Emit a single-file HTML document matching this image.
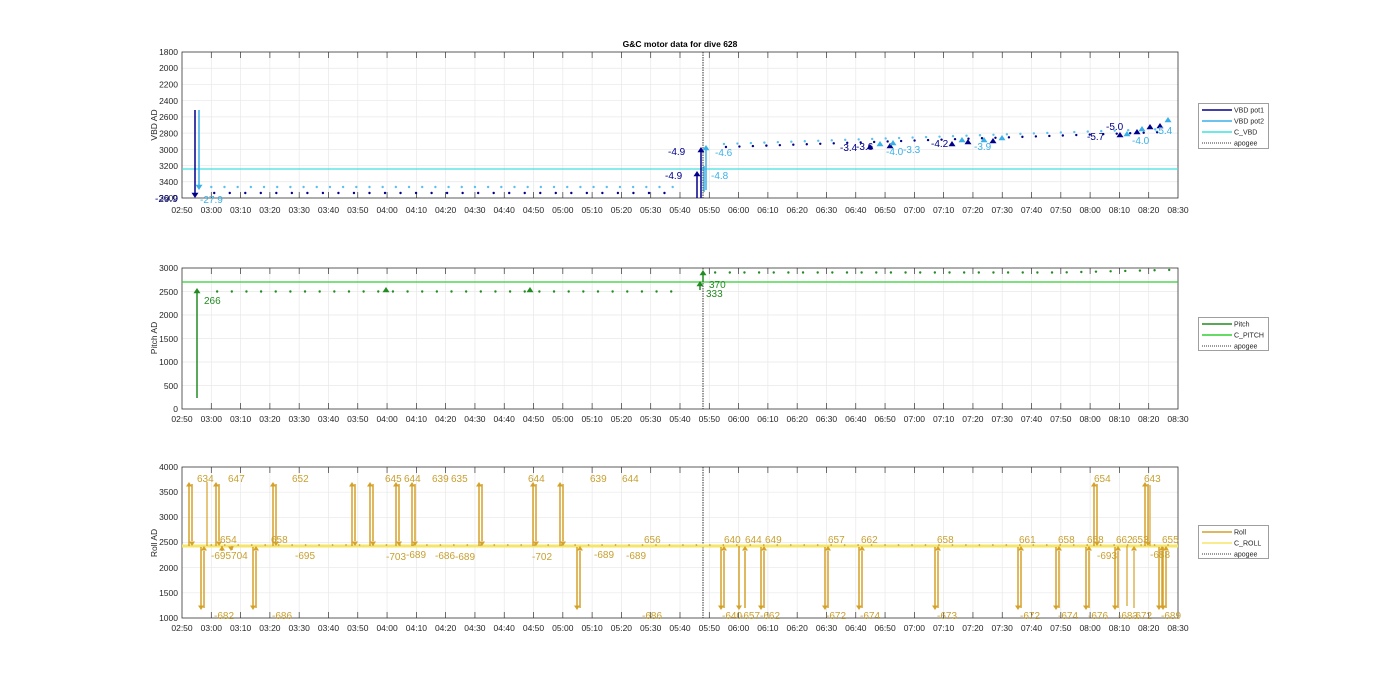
<!DOCTYPE html>
<html><head><meta charset="utf-8"><style>
body{margin:0;background:#fff;width:1400px;height:693px;overflow:hidden}
svg{display:block;font-family:"Liberation Sans",sans-serif}
.t{font-size:8.5px;fill:#262626}
</style></head><body>
<svg id="s" width="1400" height="693" xmlns="http://www.w3.org/2000/svg">
<g id="grid"></g>
<g id="data"></g>
<text x="680" y="47" text-anchor="middle" font-size="8.5" font-weight="bold" fill="#000">G&amp;C motor data for dive 628</text>
<g class="t" text-anchor="end">
<text x="178" y="55">1800</text><text x="178" y="71">2000</text><text x="178" y="87.5">2200</text><text x="178" y="104">2400</text><text x="178" y="120">2600</text><text x="178" y="136.5">2800</text><text x="178" y="153">3000</text><text x="178" y="169">3200</text><text x="178" y="185">3400</text><text x="178" y="201">3600</text>
<text x="178" y="271">3000</text><text x="178" y="295">2500</text><text x="178" y="318">2000</text><text x="178" y="342">1500</text><text x="178" y="365">1000</text><text x="178" y="389">500</text><text x="178" y="412">0</text>
<text x="178" y="470">4000</text><text x="178" y="495">3500</text><text x="178" y="520">3000</text><text x="178" y="545">2500</text><text x="178" y="571">2000</text><text x="178" y="596">1500</text><text x="178" y="621">1000</text>
</g>
<g class="t" font-size="9"><text transform="translate(157,125) rotate(-90)" text-anchor="middle">VBD AD</text>
<text transform="translate(157,338) rotate(-90)" text-anchor="middle">Pitch AD</text>
<text transform="translate(157,543) rotate(-90)" text-anchor="middle">Roll AD</text></g>
<g class="t" text-anchor="middle" id="xl1"><text x="182" y="213">02:50</text><text x="211.3" y="213">03:00</text><text x="240.6" y="213">03:10</text><text x="269.9" y="213">03:20</text><text x="299.2" y="213">03:30</text><text x="328.5" y="213">03:40</text><text x="357.8" y="213">03:50</text><text x="387.1" y="213">04:00</text><text x="416.4" y="213">04:10</text><text x="445.6" y="213">04:20</text><text x="474.9" y="213">04:30</text><text x="504.2" y="213">04:40</text><text x="533.5" y="213">04:50</text><text x="562.8" y="213">05:00</text><text x="592.1" y="213">05:10</text><text x="621.4" y="213">05:20</text><text x="650.7" y="213">05:30</text><text x="680" y="213">05:40</text><text x="709.3" y="213">05:50</text><text x="738.6" y="213">06:00</text><text x="767.9" y="213">06:10</text><text x="797.2" y="213">06:20</text><text x="826.5" y="213">06:30</text><text x="855.8" y="213">06:40</text><text x="885.1" y="213">06:50</text><text x="914.4" y="213">07:00</text><text x="943.6" y="213">07:10</text><text x="972.9" y="213">07:20</text><text x="1002.2" y="213">07:30</text><text x="1031.5" y="213">07:40</text><text x="1060.8" y="213">07:50</text><text x="1090.1" y="213">08:00</text><text x="1119.4" y="213">08:10</text><text x="1148.7" y="213">08:20</text><text x="1178" y="213">08:30</text></g>
<g class="t" text-anchor="middle"><text x="182" y="422">02:50</text><text x="211.3" y="422">03:00</text><text x="240.6" y="422">03:10</text><text x="269.9" y="422">03:20</text><text x="299.2" y="422">03:30</text><text x="328.5" y="422">03:40</text><text x="357.8" y="422">03:50</text><text x="387.1" y="422">04:00</text><text x="416.4" y="422">04:10</text><text x="445.6" y="422">04:20</text><text x="474.9" y="422">04:30</text><text x="504.2" y="422">04:40</text><text x="533.5" y="422">04:50</text><text x="562.8" y="422">05:00</text><text x="592.1" y="422">05:10</text><text x="621.4" y="422">05:20</text><text x="650.7" y="422">05:30</text><text x="680" y="422">05:40</text><text x="709.3" y="422">05:50</text><text x="738.6" y="422">06:00</text><text x="767.9" y="422">06:10</text><text x="797.2" y="422">06:20</text><text x="826.5" y="422">06:30</text><text x="855.8" y="422">06:40</text><text x="885.1" y="422">06:50</text><text x="914.4" y="422">07:00</text><text x="943.6" y="422">07:10</text><text x="972.9" y="422">07:20</text><text x="1002.2" y="422">07:30</text><text x="1031.5" y="422">07:40</text><text x="1060.8" y="422">07:50</text><text x="1090.1" y="422">08:00</text><text x="1119.4" y="422">08:10</text><text x="1148.7" y="422">08:20</text><text x="1178" y="422">08:30</text></g>
<g class="t" text-anchor="middle"><text x="182" y="631">02:50</text><text x="211.3" y="631">03:00</text><text x="240.6" y="631">03:10</text><text x="269.9" y="631">03:20</text><text x="299.2" y="631">03:30</text><text x="328.5" y="631">03:40</text><text x="357.8" y="631">03:50</text><text x="387.1" y="631">04:00</text><text x="416.4" y="631">04:10</text><text x="445.6" y="631">04:20</text><text x="474.9" y="631">04:30</text><text x="504.2" y="631">04:40</text><text x="533.5" y="631">04:50</text><text x="562.8" y="631">05:00</text><text x="592.1" y="631">05:10</text><text x="621.4" y="631">05:20</text><text x="650.7" y="631">05:30</text><text x="680" y="631">05:40</text><text x="709.3" y="631">05:50</text><text x="738.6" y="631">06:00</text><text x="767.9" y="631">06:10</text><text x="797.2" y="631">06:20</text><text x="826.5" y="631">06:30</text><text x="855.8" y="631">06:40</text><text x="885.1" y="631">06:50</text><text x="914.4" y="631">07:00</text><text x="943.6" y="631">07:10</text><text x="972.9" y="631">07:20</text><text x="1002.2" y="631">07:30</text><text x="1031.5" y="631">07:40</text><text x="1060.8" y="631">07:50</text><text x="1090.1" y="631">08:00</text><text x="1119.4" y="631">08:10</text><text x="1148.7" y="631">08:20</text><text x="1178" y="631">08:30</text></g>
<!-- top labels -->
<g font-size="10">
<text x="155" y="202" fill="#00008b">-29.9</text><text x="200" y="203" fill="#3ab0e8">-27.9</text>
<text x="668" y="155" fill="#00008b">-4.9</text><text x="665" y="179" fill="#00008b">-4.9</text>
<text x="715" y="156" fill="#3ab0e8">-4.6</text><text x="711" y="179" fill="#3ab0e8">-4.8</text>
<text x="840" y="151" fill="#00008b">-3.4</text><text x="856" y="150" fill="#00008b">-3.6</text>
<text x="886" y="155" fill="#3ab0e8">-4.0</text><text x="903" y="153" fill="#3ab0e8">-3.3</text>
<text x="931" y="147" fill="#00008b">-4.2</text><text x="974" y="150" fill="#3ab0e8">-3.9</text>
<text x="1087" y="140" fill="#00008b">-5.7</text><text x="1106" y="130" fill="#00008b">-5.0</text>
<text x="1132" y="144" fill="#3ab0e8">-4.0</text><text x="1155" y="134" fill="#3ab0e8">-5.4</text>
<text x="204" y="304" fill="#228b22">266</text><text x="709" y="288" fill="#228b22">370</text><text x="706" y="297" fill="#228b22">333</text>
</g>
<g font-size="10" fill="#c8a030">
<text x="197" y="482">634</text><text x="228" y="482">647</text><text x="292" y="482">652</text><text x="271" y="543">658</text><text x="220" y="543">654</text>
<text x="211" y="559">-695704</text><text x="214" y="619">-682</text><text x="272" y="619">-686</text><text x="295" y="559">-695</text>
<text x="385" y="482">645</text><text x="404" y="482">644</text><text x="432" y="482">639</text><text x="451" y="482">635</text>
<text x="386" y="560">-703</text><text x="406" y="558">-689</text><text x="435" y="559">-686</text><text x="455" y="560">-689</text>
<text x="528" y="482">644</text><text x="532" y="560">-702</text><text x="590" y="482">639</text><text x="622" y="482">644</text>
<text x="594" y="558">-689</text><text x="626" y="559">-689</text><text x="644" y="543">656</text><text x="642" y="619">-686</text>
<text x="724" y="543">640</text><text x="745" y="543">644</text><text x="765" y="543">649</text><text x="828" y="543">657</text><text x="861" y="543">662</text><text x="937" y="543">658</text><text x="1019" y="543">661</text><text x="1058" y="543">658</text><text x="1087" y="543">658</text><text x="1094" y="482">654</text><text x="1116" y="543">662</text><text x="1132" y="543">653</text><text x="1144" y="482">643</text><text x="1162" y="543">655</text>
<text x="722" y="619">-640</text><text x="740" y="619">-657</text><text x="760" y="619">-662</text><text x="826" y="619">-672</text><text x="860" y="619">-674</text><text x="937" y="619">-673</text><text x="1020" y="619">-672</text><text x="1058" y="619">-674</text><text x="1088" y="619">-676</text><text x="1097" y="559">-693</text><text x="1118" y="619">-683</text><text x="1132" y="619">-672</text><text x="1150" y="558">-688</text><text x="1161" y="619">-689</text>
</g>
<!-- legends -->
<g font-size="7" fill="#262626">
<rect x="1198.5" y="103.5" width="70" height="45" fill="#fff" stroke="#888" stroke-width="0.8"/>
<line x1="1202" y1="110" x2="1232" y2="110" stroke="#00008b" stroke-width="1.5"/><text x="1234" y="112.5">VBD pot1</text>
<line x1="1202" y1="121" x2="1232" y2="121" stroke="#3ab0e8" stroke-width="1.5"/><text x="1234" y="123.5">VBD pot2</text>
<line x1="1202" y1="132" x2="1232" y2="132" stroke="#40e0e0" stroke-width="1.5"/><text x="1234" y="134.5">C_VBD</text>
<line x1="1202" y1="143" x2="1232" y2="143" stroke="#333" stroke-dasharray="1,1"/><text x="1234" y="145.5">apogee</text>
<rect x="1198.5" y="317.5" width="70" height="33" fill="#fff" stroke="#888" stroke-width="0.8"/>
<line x1="1202" y1="324" x2="1232" y2="324" stroke="#228b22" stroke-width="1.5"/><text x="1234" y="326.5">Pitch</text>
<line x1="1202" y1="335" x2="1232" y2="335" stroke="#32cd32" stroke-width="1.5"/><text x="1234" y="337.5">C_PITCH</text>
<line x1="1202" y1="346" x2="1232" y2="346" stroke="#333" stroke-dasharray="1,1"/><text x="1234" y="348.5">apogee</text>
<rect x="1198.5" y="525.5" width="70" height="33" fill="#fff" stroke="#888" stroke-width="0.8"/>
<line x1="1202" y1="532" x2="1232" y2="532" stroke="#d4a12a" stroke-width="1.5"/><text x="1234" y="534.5">Roll</text>
<line x1="1202" y1="543" x2="1232" y2="543" stroke="#f5e66a" stroke-width="1.5"/><text x="1234" y="545.5">C_ROLL</text>
<line x1="1202" y1="554" x2="1232" y2="554" stroke="#333" stroke-dasharray="1,1"/><text x="1234" y="556.5">apogee</text>
</g>
</svg>
<script>
var NS="http://www.w3.org/2000/svg",G=document.getElementById('grid'),D=document.getElementById('data');
function el(p,t,a){var e=document.createElementNS(NS,t);for(var k in a)e.setAttribute(k,a[k]);p.appendChild(e);return e}
function X(m){return 182+m*996/340}
var axes=[[52,198,9],[268,409,6],[467,618,6]];
axes.forEach(function(a){
 for(var i=1;i<34;i++){var x=X(i*10);el(G,'line',{x1:x,x2:x,y1:a[0],y2:a[1],stroke:'#e8e8e8','stroke-width':0.7});
  el(G,'line',{x1:x,x2:x,y1:a[1],y2:a[1]-6,stroke:'#333','stroke-width':0.7});el(G,'line',{x1:x,x2:x,y1:a[0],y2:a[0]+6,stroke:'#333','stroke-width':0.7});}
 for(var j=1;j<a[2];j++){var y=a[0]+(a[1]-a[0])*j/a[2];el(G,'line',{x1:182,x2:1178,y1:y,y2:y,stroke:'#e8e8e8','stroke-width':0.7});}
 el(G,'rect',{x:182,y:a[0],width:996,height:a[1]-a[0],fill:'none',stroke:'#333','stroke-width':0.8});
 el(D,'line',{x1:703,x2:703,y1:a[0],y2:a[1],stroke:'#333','stroke-width':1,'stroke-dasharray':'1.5,1'});
});
function dot(x,y,c,r){el(D,'circle',{cx:x,cy:y,r:r||1.2,fill:c})}
function tri(x,y,c,up,s){s=s||3.5;var d=up?('M'+(x-s)+','+(y+s*1.5)+'L'+(x+s)+','+(y+s*1.5)+'L'+x+','+y+'Z'):('M'+(x-s)+','+(y-s*1.5)+'L'+(x+s)+','+(y-s*1.5)+'L'+x+','+y+'Z');el(D,'path',{d:d,fill:c})}
function ln(x1,y1,x2,y2,c,w){el(D,'line',{x1:x1,y1:y1,x2:x2,y2:y2,stroke:c,'stroke-width':w||1.5})}
var DB='#00008b',LB='#3ab0e8',CY='#40e0e0';
// top
ln(182,169,1178,169,CY,1.2);
for(var m=10;m<170;m+=4.5){dot(X(m),187,'#5bc0f0');}
for(var m=11;m<168;m+=5.3){dot(X(m),193,DB);}
for(var m=185;m<333;m+=4.6){var y=147-(m-185)*0.1;dot(X(m),y-3,'#5bc0f0');dot(X(m)+2,y,DB);}
ln(195,110,195,194,DB);tri(195,198,DB,false);ln(199,110,199,186,LB);tri(199,190,LB,false);
ln(697,198,697,174,DB);tri(697,171,DB,true);ln(701,198,701,150,DB);tri(701,147,DB,true);
ln(704,192,704,166,LB);ln(706,190,706,148,LB);tri(706,145,LB,true);
[[870,144,DB],[880,141,LB],[890,143,DB],[893,140,LB],[952,141,DB],[962,137,LB],[968,139,DB],[984,137,LB],[993,138,DB],[1002,135,LB],[1120,132,DB],[1127,131,LB],[1137,129,DB],[1142,126,LB],[1150,124,DB],[1168,117,LB],[1160,123,DB]].forEach(function(p){tri(p[0],p[1],p[2],true,3.5)});
// middle
ln(182,282,1178,282,'#32cd32',1.2);
for(var m=12;m<168;m+=5){dot(X(m),291.5,'#228b22');}
for(var m=182;m<338;m+=5){dot(X(m),272.5-(m>300?(m-300)*0.07:0),'#228b22');}
ln(197,398,197,292,'#228b22');tri(197,288,'#228b22',true,3.5);
ln(700,290,700,284,'#228b22');tri(700,281,'#228b22',true,3.5);ln(703,282,703,274,'#228b22');tri(703,270,'#228b22',true,3.5);
tri(386,287,'#228b22',true,3.5);tri(530,287,'#228b22',true,3.5);
// bottom
var Y='#d4a12a';
el(D,'rect',{x:182,y:544.5,width:996,height:3,fill:'#f5e66a'});
for(var m=10;m<340;m+=4.6){dot(X(m),545,'#c8a030',0.9);}
function up(x){ln(x,546,x,486,Y);tri(x,482,Y,true,3);ln(x+3,484,x+3,541,Y);tri(x+3,546,Y,false,3);}
function dn(x){ln(x,547,x,606,Y);tri(x,610,Y,false,3);ln(x+3,608,x+3,551,Y);tri(x+3,546,Y,true,3);}
[189,216,273,352,370,396,412,479,533,560,1094,1145].forEach(up);
[201,253,577,721,761,825,859,935,1018,1056,1086,1115,1159,1163].forEach(dn);
ln(207,482,207,546,Y,1.2);ln(739,546,739,606,Y);tri(739,610,Y,false,3);ln(745,608,745,551,Y);tri(745,546,Y,true,3);
ln(1127,546,1127,606,Y,1.2);ln(1134,608,1134,551,Y,1.2);tri(1134,546,Y,true,3);ln(1150,485,1150,546,Y,1.2);
ln(222,546,222,551,Y);tri(222,546,Y,true,3);ln(232,546,232,550,Y);tri(231,551,Y,false,3);
</script>
</body></html>
